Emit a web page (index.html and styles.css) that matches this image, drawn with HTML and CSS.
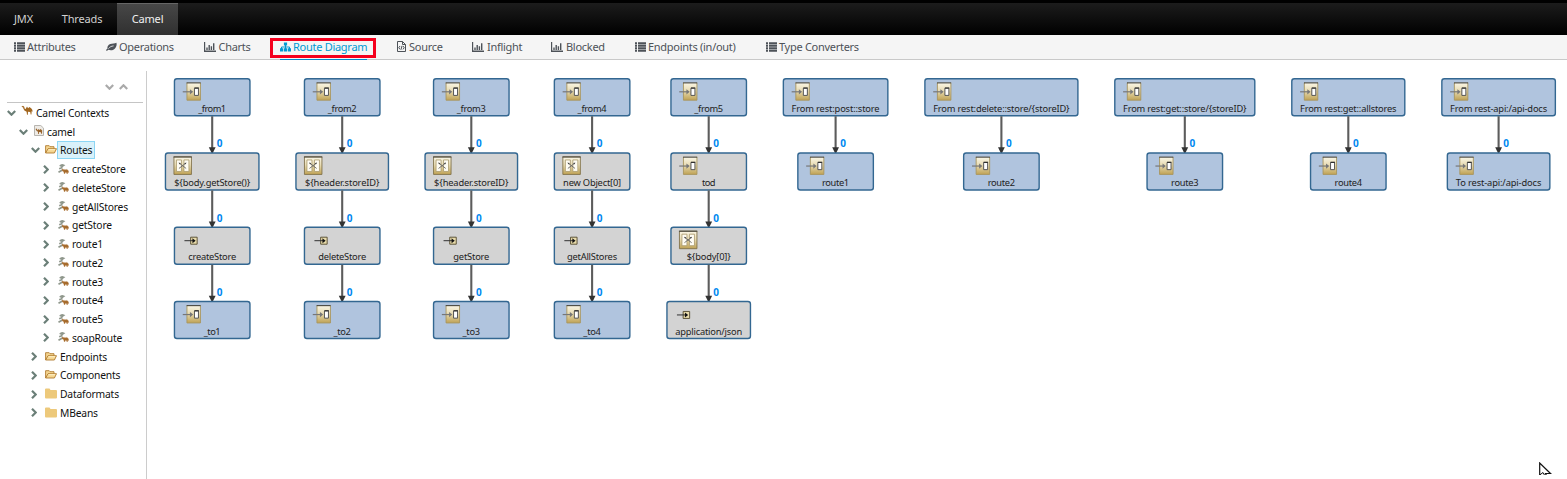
FILE: index.html
```html
<!DOCTYPE html>
<html lang="en">
<head>
<meta charset="utf-8">
<title>Camel</title>
<link rel="stylesheet" href="styles.css">
</head>
<body>
<svg class="defs" width="0" height="0" aria-hidden="true">
  <defs>
    <linearGradient id="gold" x1="0" y1="0" x2="0" y2="1"><stop offset="0" stop-color="#faf6e6"/><stop offset=".45" stop-color="#e8dcb4"/><stop offset="1" stop-color="#bfa254"/></linearGradient>
    <symbol id="i-list" viewBox="0 0 11 10"><path d="M0 .3h2v1.900H0zM3 .3h8v1.900H3zM0 2.800h2v1.900H0zM3 2.800h8v1.900H3zM0 5.300h2v1.900H0zM3 5.300h8v1.900H3zM0 7.800h2v1.900H0zM3 7.800h8v1.900H3z" fill="currentColor"/></symbol>
    <symbol id="i-leaf" viewBox="0 0 11 10"><path d="M10.400.800C8.800 2 6.400 1.300 4.300 2.100 2 3 1.100 4.700 1.500 6.600L0 8.100l.8.900 1.500-1.300c2.800 1.100 5.500.3 7.100-1.800C10.700 4.200 10.900 2.200 10.400.8z" fill="currentColor"/><path d="M2.500 6.600C4 4.700 5.300 4.200 7.600 3.900" fill="none" stroke="#f5f5f5" stroke-width=".8"/></symbol>
    <symbol id="i-chart" viewBox="0 0 12 10"><path d="M.5 0v9.300H12M3 8V5.500M5.200 8V3M7.400 8V4.200M9.700 8V1.300" fill="none" stroke="currentColor" stroke-width="1.400"/></symbol>
    <symbol id="i-sitemap" viewBox="0 0 11 10"><path d="M3.900.5h3.200v3H3.900zM0 6.300h3.200v3.200H0zM3.900 6.300h3.200v3.200H3.900zM7.800 6.300h3.200v3.200H7.800z" fill="currentColor"/><path d="M5.500 3v4M1.500 7V5h8v2" fill="none" stroke="currentColor"/></symbol>
    <symbol id="i-code" viewBox="0 0 9 11"><path d="M.5.500h5L8.500 3.500v7h-8zM5.500.500v3h3M3 5 1.800 6.700 3 8.400M6 5l1.200 1.700L6 8.400M5 4.800 4 8.700" fill="none" stroke="currentColor" stroke-width="1"/></symbol>
    <symbol id="i-down" viewBox="0 0 9 6"><path d="m.8 1 3.700 3.700L8.200 1" fill="none" stroke="currentColor" stroke-width="2.200"/></symbol>
    <symbol id="i-right" viewBox="0 0 6 9"><path d="m1 .8 3.700 3.700L1 8.200" fill="none" stroke="currentColor" stroke-width="2.200"/></symbol>
    <symbol id="i-camel" viewBox="0 0 12 11"><path d="M.4 1.800 2 .8l1.200.9.6 2 .8.2L6 1.500 7.100 3.200 8.500 2 10.400 3.500l1 1.500.1 2-.8-1-.3 3.600h-.7L9.200 7 7 6.700 6.800 9.700H6L5.600 6.800 3.400 5.500 2.300 3.600 2.200 2.500z" fill="#a26720"/></symbol>
    <symbol id="i-context" viewBox="0 0 10 11"><path d="M.5.500h6.300l2.700 2.600v7.400h-9z" fill="#eeebe6" stroke="#b7b5b0"/><path d="m1.500 4 1.200-.6.9 1.800 1.100-1.200.8 1L6.700 4 8.200 5.400 8 8.800H7.200L6.900 7.200 5 7v2h-.8L4 6.700 2.700 5.900z" fill="#98642c"/></symbol>
    <symbol id="i-open" viewBox="0 0 12 10"><path d="M.6 8.500V1.200h3.600l.8 1h4v2M.6 8.500 3 4.200h8.500L9.400 8.500z" fill="#f5d691" stroke="#b07c30" stroke-width=".9"/><path d="M3.400 5.200h6.700" stroke="#fff2cb"/></symbol>
    <symbol id="i-folder" viewBox="0 0 12 10"><path d="M0 1.100Q0 .1 1 .1h3.500l1 1.300H11q1 0 1 1V9q0 .9-1 .9H1Q0 9.900 0 9z" fill="#edc97b"/></symbol>
    <symbol id="i-route" viewBox="0 0 11 11"><path d="M1.800 2.200Q3.500.3 5.600 1.300 2.800 3 4 4.200M1.200 4.800 4.500 3.500M.5 8.300 4.500 6" fill="none" stroke="#8f978c" stroke-width="1.700"/><path d="M4 5.400 5 4.900l1 1.300.9-.9.900.8 1-.7 1.400 1.200.4 1.800-.8-.5-.2 1.600h-.8L8.300 8.300 7.200 8.200 7 9.500h-.8L5.800 7.800 4.500 7z" fill="#a66b2c" stroke="#a66b2c" stroke-width=".4"/></symbol>
    <symbol id="n-end" viewBox="0 0 19 19" overflow="visible"><path d="M4.500.500h13.500v17.500H4.500z" fill="url(#gold)"/><path d="M4.500.500V18M18 .500V18H4.500" fill="none" stroke="#a8955e" stroke-width=".9"/><path d="M4.200.700h14" stroke="#38372f" stroke-width="1"/><path d="M.3 9.600h9" stroke="#777" stroke-width="1.200"/><path d="m7.500 7 3.200 2.600-3.200 2.600z" fill="#777"/><path d="M12 6h4v7.200h-4z" fill="#fff" stroke="#555"/><path d="M12 5.800h4.400" stroke="#222"/></symbol>
    <symbol id="n-trans" viewBox="0 0 19 19" overflow="visible"><path d="M.5.500h17.500v17.500H.5z" fill="url(#gold)" stroke="#81734b" stroke-width=".9"/><path d="M0 .500h18.400" stroke="#424037"/><path d="M3 3.500h5v11.500H3zM10.500 3.500h5v11.500h-5z" fill="#fffdf4" stroke="#a8986a" stroke-width=".8"/><path d="m5.500 6.500 7.200 5.500M5.500 12l7.200-5.500" stroke="#666" stroke-width=".9"/><path d="m5.200 6.200 2.300.3-1.300 1.600zM13 6.200l-2.300.3L12 8.100z" fill="#444"/></symbol>
    <symbol id="n-bean" viewBox="0 0 14 8" overflow="visible"><path d="M6.200.500h6.500v7H6.200z" fill="#e8dbab" stroke="#51482d" stroke-width=".9"/><path d="M0 4h9" stroke="#333"/><path d="m8 1.500 3.200 2.500L8 6.500z" fill="#111"/></symbol>
    <symbol id="edge" viewBox="0 0 22 38" overflow="visible"><path d="M4 0v33" stroke="#5c5c5c" stroke-width="2.100"/><path d="M.6 31h6.800L4 38z" fill="#333"/><text class="count" x="8.600" y="31.250">0</text></symbol>
  </defs>
</svg>

<nav class="topbar">
  <a class="tab">JMX</a><a class="tab tab-threads">Threads</a><a class="tab tab-active">Camel</a>
</nav>
<nav class="subnav">
  <a class="sub"><svg class="ic"><use href="#i-list"/></svg>Attributes</a>
  <a class="sub"><svg class="ic"><use href="#i-leaf"/></svg>Operations</a>
  <a class="sub"><svg class="ic ic-wide"><use href="#i-chart"/></svg>Charts</a>
  <a class="sub sub-active"><svg class="ic"><use href="#i-sitemap"/></svg>Route Diagram<span class="highlight"></span></a>
  <a class="sub"><svg class="ic ic-file"><use href="#i-code"/></svg>Source</a>
  <a class="sub"><svg class="ic ic-wide"><use href="#i-chart"/></svg>Inflight</a>
  <a class="sub"><svg class="ic ic-wide"><use href="#i-chart"/></svg>Blocked</a>
  <a class="sub"><svg class="ic"><use href="#i-list"/></svg>Endpoints (in/out)</a>
  <a class="sub"><svg class="ic"><use href="#i-list"/></svg>Type Converters</a>
</nav>
<div class="main">
  <aside class="sidebar">
    <div class="tools"><svg class="down"><use href="#i-down"/></svg><svg class="down flip"><use href="#i-down"/></svg></div>
    <ul class="tree">
      <li class="l0"><svg class="down"><use href="#i-down"/></svg><svg class="ti camel"><use href="#i-camel"/></svg><span class="lb">Camel Contexts</span></li>
      <li class="l1"><svg class="down"><use href="#i-down"/></svg><svg class="ti"><use href="#i-context"/></svg><span class="lb">camel</span></li>
      <li class="l2"><svg class="down"><use href="#i-down"/></svg><svg class="ti"><use href="#i-open"/></svg><span class="lb selected">Routes</span></li>
      <li class="l3"><svg class="right"><use href="#i-right"/></svg><svg class="ti"><use href="#i-route"/></svg><span class="lb">createStore</span></li>
      <li class="l3"><svg class="right"><use href="#i-right"/></svg><svg class="ti"><use href="#i-route"/></svg><span class="lb">deleteStore</span></li>
      <li class="l3"><svg class="right"><use href="#i-right"/></svg><svg class="ti"><use href="#i-route"/></svg><span class="lb">getAllStores</span></li>
      <li class="l3"><svg class="right"><use href="#i-right"/></svg><svg class="ti"><use href="#i-route"/></svg><span class="lb">getStore</span></li>
      <li class="l3"><svg class="right"><use href="#i-right"/></svg><svg class="ti"><use href="#i-route"/></svg><span class="lb">route1</span></li>
      <li class="l3"><svg class="right"><use href="#i-right"/></svg><svg class="ti"><use href="#i-route"/></svg><span class="lb">route2</span></li>
      <li class="l3"><svg class="right"><use href="#i-right"/></svg><svg class="ti"><use href="#i-route"/></svg><span class="lb">route3</span></li>
      <li class="l3"><svg class="right"><use href="#i-right"/></svg><svg class="ti"><use href="#i-route"/></svg><span class="lb">route4</span></li>
      <li class="l3"><svg class="right"><use href="#i-right"/></svg><svg class="ti"><use href="#i-route"/></svg><span class="lb">route5</span></li>
      <li class="l3"><svg class="right"><use href="#i-right"/></svg><svg class="ti"><use href="#i-route"/></svg><span class="lb">soapRoute</span></li>
      <li class="l2"><svg class="right"><use href="#i-right"/></svg><svg class="ti"><use href="#i-open"/></svg><span class="lb">Endpoints</span></li>
      <li class="l2"><svg class="right"><use href="#i-right"/></svg><svg class="ti"><use href="#i-open"/></svg><span class="lb">Components</span></li>
      <li class="l2"><svg class="right"><use href="#i-right"/></svg><svg class="ti"><use href="#i-folder"/></svg><span class="lb">Dataformats</span></li>
      <li class="l2"><svg class="right"><use href="#i-right"/></svg><svg class="ti"><use href="#i-folder"/></svg><span class="lb">MBeans</span></li>
    </ul>
  </aside>
  <svg class="diagram" id="diagram" viewBox="147 60 1420 419" width="1420" height="419"></svg>
</div>
<svg class="cursor" viewBox="0 0 14 13"><path d="M.7 13V1L11.500 11.500H6.500L8 15" fill="#fff" stroke="#111" stroke-width="1.200"/><path d="M.7 13 4 10.500 6 14" fill="none" stroke="#111" stroke-width="1"/></svg>
<script src="diagram.js"></script>
</body>
</html>
```
FILE: styles.css
```css
* { box-sizing: border-box; }
body { margin: 0; width: 1567px; height: 479px; overflow: hidden; background: #fff; font-family: "Noto Sans", sans-serif; color: #222; }
.defs { position: absolute; }
.topbar { display: flex; height: 35px; padding-top: 3px; background: linear-gradient(#000 0 3px, #1c1c1c 3px, #000 35px); }
.tab { display: flex; align-items: center; justify-content: center; width: 47px; padding-bottom: 1px; color: #d1d1d1; font-size: 11px; letter-spacing: -0.15px; }
.tab-threads { width: 70px; }
.tab-active { width: 61px; padding-bottom: 2px; color: #f1f1f1; background: linear-gradient(#474747, #303030); border-top: 1px solid #666; }
.subnav { display: grid; grid-template-columns: 92px 97.5px 76.5px 117px 75px 79px 84px 131px 110px; height: 25px; padding-left: 14px; background: #f5f5f5; border-bottom: 1px solid #c9c9c9; }
.sub { position: relative; display: flex; align-items: center; justify-self: start; gap: 2px; height: 25px; padding-bottom: 2px; color: #4d5258; font-size: 11px; letter-spacing: -0.28px; white-space: nowrap; }
.ic { width: 11px; height: 10px; }
.ic-wide { width: 12px; margin-right: 1px; }
.ic-file { width: 9px; height: 11px; margin-right: 1px; }
.sub-active { padding-bottom: 1px; color: #0099d3; border-bottom: 1px solid #0088ce; }
.highlight { position: absolute; left: -10px; top: 3px; width: 106px; height: 20px; border: 3px solid #f5001d; }
.main { display: flex; height: 419px; }
.sidebar { width: 147px; margin-top: 11px; padding-left: 7px; border-right: 1px solid #ccc; }
.tools { display: flex; gap: 5px; width: 136px; height: 32px; padding: 13px 0 0 98px; border-bottom: 1px solid #c5c5c5; color: #aaa; }
.down { width: 9px; height: 6px; flex: none; }
.right { width: 6px; height: 9px; flex: none; margin-right: 3px; }
.flip { transform: rotate(180deg); }
.tree { list-style: none; margin: 0.4px 0 0; padding: 0; }
.tree li { display: flex; align-items: center; height: 18.75px; font-size: 10.3px; letter-spacing: -0.18px; color: #111; white-space: nowrap; }
.tree .down, .tree .right { color: #6b7f78; }
.ti { width: 12px; height: 11px; margin: 0 0 0 5px; flex: none; }
.lb { padding: 0 2px; line-height: 16px; border: 1px solid transparent; }
.selected { background: #d9f1fa; border-color: #8cd6f5; }
.l0 .ti { margin-top: -4px; }
.l1 { padding-left: 12px; }
.l1 .ti { width: 10px; margin: -2px 0 0 6px; }
.l2 { padding-left: 24px; }
.l2 .ti { margin-top: -1px; }
.l3 { padding-left: 36px; }
.l3 .ti { width: 11px; margin-left: 6px; }
.diagram { flex: none; font-family: "Noto Sans", sans-serif; }
.node { stroke: #336791; stroke-width: 1.4; }
.endpoint { fill: #b0c4de; }
.step { fill: #d3d3d3; }
.label { font-size: 9.3px; fill: #222; text-anchor: middle; }
.count { font-size: 10px; font-weight: bold; fill: #0088f0; }
.cursor { position: absolute; left: 1539px; top: 462px; width: 14px; height: 13px; }
```
FILE: diagram.js
```js
// Each column: centre x, then nodes as [label, node width, label width, icon, kind]
const columns = [
  [212.2, [["_from1", 75.5, 28, "end", "endpoint"], ["${body.getStore()}", 93.5, 76, "trans", "step"], ["createStore", 75.5, 48, "bean", "step"], ["_to1", 75.5, 17, "end", "endpoint"]]],
  [342.2, [["_from2", 75.5, 29, "end", "endpoint"], ["${header.storeID}", 92.5, 74.5, "trans", "step"], ["deleteStore", 75.5, 48, "bean", "step"], ["_to2", 75.5, 17.5, "end", "endpoint"]]],
  [471.3, [["_from3", 75.5, 29, "end", "endpoint"], ["${header.storeID}", 92.5, 74.5, "trans", "step"], ["getStore", 75.5, 36, "bean", "step"], ["_to3", 75.5, 17.5, "end", "endpoint"]]],
  [592.1, [["_from4", 75.5, 29, "end", "endpoint"], ["new Object[0]", 75.5, 58, "trans", "step"], ["getAllStores", 75.5, 50, "bean", "step"], ["_to4", 75.5, 17.5, "end", "endpoint"]]],
  [708.7, [["_from5", 75.5, 29, "end", "endpoint"], ["tod", 75.5, 13.5, "end", "step"], ["${body[0]}", 75.5, 44, "trans", "step"], ["application/json", 83.5, 67, "bean", "step"]]],
  [835.6, [["From rest:post::store", 104.5, 88, "end", "endpoint"], ["route1", 75.5, 27, "end", "endpoint"]]],
  [1001.4, [["From rest:delete::store/{storeID}", 153, 136.5, "end", "endpoint"], ["route2", 75.5, 27.5, "end", "endpoint"]]],
  [1184.8, [["From rest:get::store/{storeID}", 140, 123.5, "end", "endpoint"], ["route3", 75.5, 27.5, "end", "endpoint"]]],
  [1348.3, [["From rest:get::allstores", 113, 96.5, "end", "endpoint"], ["route4", 75.5, 27.5, "end", "endpoint"]]],
  [1498.6, [["From rest-api:/api-docs", 113.5, 97, "end", "endpoint"], ["To rest-api:/api-docs", 102.5, 85.5, "end", "endpoint"]]]
];
const iconBoxes = { end: [8, 3.5, 19, 19], trans: [8, 3.5, 19, 19], bean: [10, 9.5, 14, 8] };
let markup = "";
for (const [cx, nodes] of columns) {
  nodes.forEach(([label, width, labelWidth, icon, kind], row) => {
    const top = 78.7 + row * 74.25;
    const left = cx - width / 2;
    const [dx, dy, iw, ih] = iconBoxes[icon];
    markup += `<rect class="node ${kind}" x="${left}" y="${top}" width="${width}" height="37" rx="2.5"/>`
      + `<use href="#n-${icon}" x="${left + dx}" y="${top + dy}" width="${iw}" height="${ih}"/>`
      + `<text class="label" x="${cx}" y="${top + 33.1}" textLength="${labelWidth}">${label}</text>`;
    if (row < nodes.length - 1) {
      markup += `<use href="#edge" x="${cx - 4}" y="${top + 37.5}" width="22" height="38"/>`;
    }
  });
}
document.getElementById("diagram").innerHTML = markup;
```
